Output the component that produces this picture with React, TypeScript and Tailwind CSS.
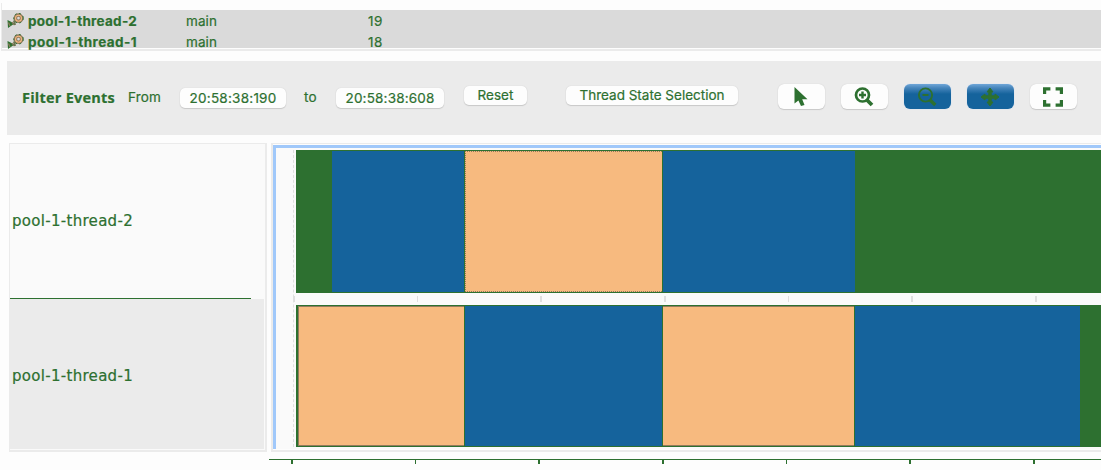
import React from "react";

type Segment = { width: string; color: string };

const sans = "font-['Inter','Liberation_Sans',sans-serif]";

function GearIcon() {
  return (
    <svg width="18" height="15" viewBox="0 0 18 15" className="block shrink-0">
      <path d="M.5 7 L7.5 10.5 L1 15 Z" fill="#2d7030" />
      <path d="M1.5 9.5 L3 13 M5 9 L7 12" stroke="#927b5d" strokeWidth="1.2" />
      <circle cx="11.5" cy="5.2" r="4.2" fill="#f7ba7f" stroke="#927b5d" strokeWidth="1.4" />
      <circle cx="11.5" cy="5.2" r="4.8" fill="none" stroke="#2d7030" strokeWidth="1" strokeDasharray="2 2.5" />
      <circle cx="11.5" cy="5.2" r="1.9" fill="#dadada" stroke="#927b5d" strokeWidth="1.1" />
      <path d="M7 7.5 L8 12" stroke="#6b7550" strokeWidth="2" />
    </svg>
  );
}

function ThreadRow({ name, id }: { name: string; id: string }) {
  return (
    <div className="flex h-[21px] items-center pl-[5px]">
      <GearIcon />
      <span className="ml-[3px] w-[158px]">
        <Fit width={109} size={13.5} weight={700} family="Inter, sans-serif">{name}</Fit>
      </span>
      <span className="w-[182px]"><Fit width={31} size={13.5} family="Inter, sans-serif">main</Fit></span>
      <span><Fit width={15} size={13.5} family="Inter, sans-serif">{id}</Fit></span>
    </div>
  );
}

/* Spreads a label over a fixed width by adjusting its letter spacing. */
function Fit({ children, width, size, weight = 400, family }: {
  children: string; width: number; size: number; weight?: number; family: string;
}) {
  const ref = React.useRef<HTMLSpanElement>(null);
  const [spacing, setSpacing] = React.useState(0);
  React.useLayoutEffect(() => {
    if (ref.current) {
      setSpacing((width - ref.current.getBoundingClientRect().width) / children.length);
    }
  }, [children, width]);
  return (
    <span
      ref={ref}
      className="block w-max whitespace-nowrap leading-[18px] [-webkit-text-stroke:0.2px_#2d7030]"
      style={{ fontFamily: family, fontSize: size, fontWeight: weight, letterSpacing: spacing }}
    >
      {children}
    </span>
  );
}

function Pill({ children, className }: { children: React.ReactNode; className: string }) {
  return (
    <div className={`flex shrink-0 items-center justify-center rounded-[5px] bg-[#fdfdfd] shadow-[0_1px_1px_#c8c8c8,0_0_1px_#c0c0c0] ${className}`}>
      {children}
    </div>
  );
}

function ToolButton({ active, children }: { active?: boolean; children: React.ReactNode }) {
  return (
    <button
      className={
        active
          ? "flex h-[25px] w-[47px] shrink-0 items-center justify-center rounded-[6px] bg-[linear-gradient(#6fa6d8_0px,#4685bb_4px,#15639c_10px)] pr-[2px] shadow-[0_0_1px_#a0c8fa]"
          : "flex h-[25px] w-[47px] shrink-0 items-center justify-center rounded-[6px] bg-[#fdfdfd] pr-[2px] shadow-[0_1px_1px_#c8c8c8,0_0_1px_#c0c0c0]"
      }
    >
      {children}
    </button>
  );
}

function Lane({ segments, className }: { segments: Segment[]; className: string }) {
  return (
    <div className={`flex w-[805px] border-y border-[#2d7030] bg-[#2d7030] ${className}`}>
      {segments.map((s, i) => (
        <div key={i} className={`shrink-0 ${s.width} ${s.color}`} />
      ))}
    </div>
  );
}

function Marks({ className }: { className: string }) {
  return (
    <div className={`flex gap-[122.2px] ${className}`}>
      {[0, 1, 2, 3, 4, 5, 6].map((n) => (
        <span key={n} className="h-full w-[1.5px] shrink-0 bg-current" />
      ))}
    </div>
  );
}

const green = "bg-[#2d7030]";
const blue = "bg-[#15639c]";
const orange = "bg-[#f7ba7f] border-y border-[#927b5d]";
const orangeDotted = "bg-[#f7ba7f] border border-r-0 border-dotted border-[#927b5d]";

export default function App() {
  return (
    <div className={`flex h-[470px] w-[1101px] flex-col overflow-hidden bg-[#fdfdfd] text-[#2d7030] ${sans}`}>
      <div className="mt-[3px] ml-px h-[48px] shrink-0 border-b-2 border-l border-[#ebebeb] pt-[7px]">
        <div className="h-[38px] bg-[#dadada]">
          <ThreadRow name="pool-1-thread-2" id="19" />
          <ThreadRow name="pool-1-thread-1" id="18" />
        </div>
      </div>

      <div className="mt-[10px] ml-[7px] flex h-[74px] shrink-0 items-start bg-[#ebebeb] pl-[15px]">
        <div className="mt-[28px] w-[106px] shrink-0">
          <Fit width={93} size={14.5} weight={700} family="'Open Sans', sans-serif">Filter Events</Fit>
        </div>
        <div className="mt-[27px] w-[52px] shrink-0">
          <Fit width={33} size={13.5} family="Inter, sans-serif">From</Fit>
        </div>
        <Pill className="mt-[27px] h-[20px] w-[106px]">
          <Fit width={87} size={13.5} family="Inter, sans-serif">20:58:38:190</Fit>
        </Pill>
        <div className="mt-[27px] ml-[18px] w-[32px] shrink-0">
          <Fit width={13} size={13.5} family="Inter, sans-serif">to</Fit>
        </div>
        <Pill className="mt-[27px] h-[20px] w-[108px]">
          <Fit width={89} size={13.5} family="Inter, sans-serif">20:58:38:608</Fit>
        </Pill>
        <Pill className="mt-[25px] ml-[20px] h-[19px] w-[63px] pb-[2px]">
          <Fit width={36} size={13.5} family="Inter, sans-serif">Reset</Fit>
        </Pill>
        <Pill className="mt-[25px] ml-[39px] h-[19px] w-[172px] pb-[2px]">
          <Fit width={145} size={13.5} family="Inter, sans-serif">Thread State Selection</Fit>
        </Pill>
        <div className="mt-[23px] ml-[40px] flex gap-[16px]">
          <ToolButton>
            <svg width="14" height="20" viewBox="0 0 14 20" fill="#2d7030">
              <path d="M.5 0 V16.5 L4.4 13.5 L7 19 L10.5 18 L8.2 12.2 H13.5 Z" />
            </svg>
          </ToolButton>
          <ToolButton>
            <svg width="20" height="20" viewBox="0 0 20 20" fill="none" stroke="#2d7030">
              <circle cx="8.5" cy="8" r="6.5" strokeWidth="2.7" />
              <path d="M13 13 L18 18" strokeWidth="3.8" />
              <path d="M8.5 4.5 V11.5 M5 8 H12" strokeWidth="2.4" />
            </svg>
          </ToolButton>
          <ToolButton active>
            <svg width="20" height="20" viewBox="0 0 20 20" fill="none" stroke="#2d7030">
              <circle cx="8.5" cy="8" r="6.6" strokeWidth="1.9" />
              <path d="M13 13 L18.3 18" strokeWidth="3.4" />
              <path d="M5.5 8 H11.5" strokeWidth="2" />
            </svg>
          </ToolButton>
          <ToolButton active>
            <svg width="20" height="20" viewBox="0 0 20 20" fill="#2d7030">
              <path d="M10 1 L13 5 H11.2 V8.8 H15 V7 L19 10 L15 13 V11.2 H11.2 V15 H13 L10 19 L7 15 H8.8 V11.2 H5 V13 L1 10 L5 7 V8.8 H8.8 V5 H7 Z" stroke="#2d7030" strokeWidth="1" strokeLinejoin="round" />
            </svg>
          </ToolButton>
          <ToolButton>
            <svg width="20" height="20" viewBox="0 0 20 20" fill="none" stroke="#2d7030" strokeWidth="3.2">
              <path d="M1.6 7 V1.8 H7.4 M12.6 1.8 H18.4 V7 M18.4 13 V18.2 H12.6 M7.4 18.2 H1.6 V13" />
            </svg>
          </ToolButton>
        </div>
      </div>

      <div className="mt-[8px] ml-[9px] flex h-[309px] shrink-0">
        <div className="w-[258px] shrink-0 border border-r-2 border-b-2 border-[#ebebeb] bg-[#fafafa]">
          <div className="flex h-[155px] w-[241px] items-center border-b border-[#2d7030] pl-[2px]">
            <Fit width={121} size={15} weight={400} family="'DejaVu Sans', sans-serif">pool-1-thread-2</Fit>
          </div>
          <div className="flex h-[150px] w-[254px] items-center bg-[#ebebeb] pt-[3px] pl-[2px]">
            <Fit width={121} size={15} weight={400} family="'DejaVu Sans', sans-serif">pool-1-thread-1</Fit>
          </div>
        </div>
        <div className="ml-[4px] w-[830px] shrink-0 border-t border-b-2 border-l-2 border-[#ebebeb] pt-px">
          <div className="h-[304px] border-t-[3px] border-l-[3px] border-[#a0c8fa] bg-[#fafafa] pt-[2px]">
            <div className="ml-[17px] flex flex-col border-l border-dashed border-[#dfdfdf] pl-[2px]">
              <Lane
                className="h-[143px]"
                segments={[
                  { width: "w-[36px]", color: green },
                  { width: "w-[132px]", color: blue },
                  { width: "w-px", color: green },
                  { width: "w-[197px]", color: orangeDotted },
                  { width: "w-px", color: green },
                  { width: "w-[192px]", color: blue },
                ]}
              />
              <Marks className="my-[3px] ml-[-3px] h-[6px] text-[#dfdfdf]" />
              <Lane
                className="h-[142px]"
                segments={[
                  { width: "w-[2px]", color: green },
                  { width: "w-px", color: "bg-[#927b5d]" },
                  { width: "w-[165px]", color: orange },
                  { width: "w-px", color: green },
                  { width: "w-[197px]", color: blue },
                  { width: "w-px", color: green },
                  { width: "w-[191px]", color: orange },
                  { width: "w-px", color: green },
                  { width: "w-[225px]", color: blue },
                ]}
              />
            </div>
          </div>
        </div>
      </div>

      <div className="mt-[7px] ml-[269px] h-[6px] shrink-0 border-t border-[#2d7030] pl-[22px]">
        <Marks className="h-[4px] text-[#2d7030]" />
      </div>
    </div>
  );
}
